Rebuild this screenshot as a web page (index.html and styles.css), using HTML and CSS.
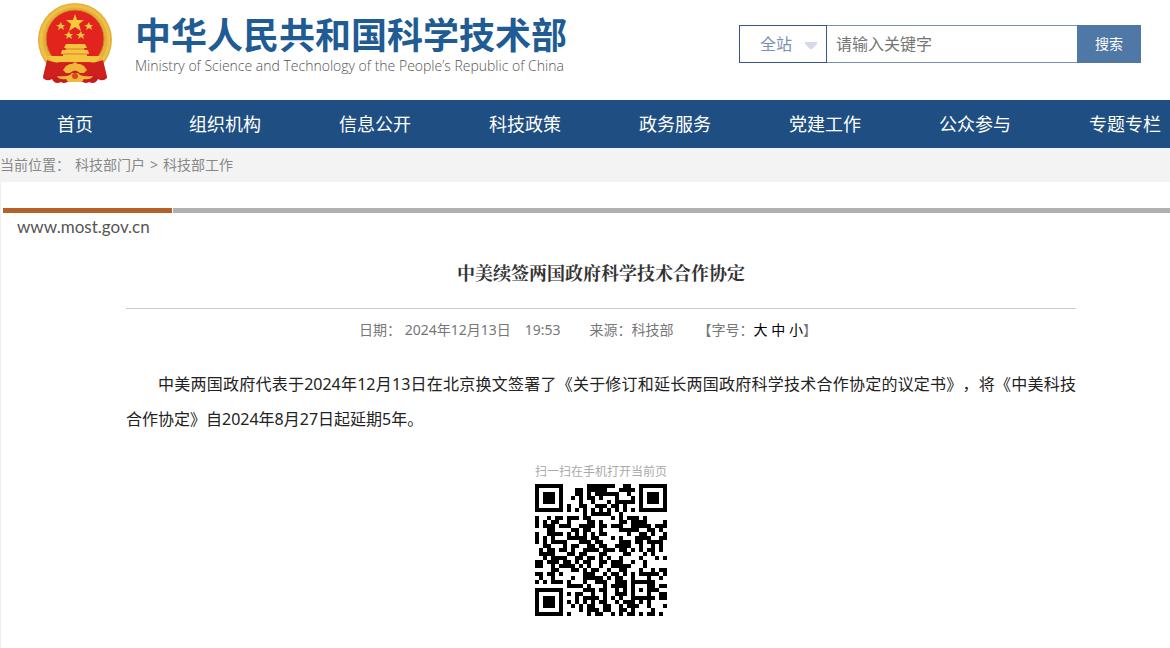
FILE: index.html
```html
<!DOCTYPE html>
<html lang="zh-CN">
<head>
<meta charset="utf-8">
<title>中美续签两国政府科学技术合作协定</title>
<link rel="stylesheet" href="styles.css">
</head>
<body>
<div class="page">
  <header class="header">
    <a class="brand" href="#">
      <svg class="emblem" viewBox="0 0 76 82" aria-hidden="true">
        <path fill="#c91a1e" d="M11 56L6 76q4 4 9 1q3 6 9 3q3 2 6 0h16q3 2 6 0q6 3 9-3q5 3 9-1L65 56z"/>
        <circle cx="38" cy="38" r="37" fill="#e5b039"/>
        <circle cx="38" cy="38" r="34" fill="none" stroke="#edc047" stroke-width="3"/>
        <circle cx="38" cy="37" r="29" fill="#e3231e" stroke="#c98b28"/>
        <path fill="#f9c93c" d="M38 12l2 6h7l-5 4 2 7-6-4-6 4 2-7-5-4h7z"/>
        <g fill="#f4c63f">
          <path d="M24 20l1 3h3l-2 2 1 3-3-2-3 2 1-3-3-2h3z"/>
          <path d="M52 20l1 3h3l-2 2 1 3-3-2-3 2 1-3-3-2h3z"/>
          <path d="M32 29l1 3h3l-2 2 1 3-3-2-3 2 1-3-3-2h3z"/>
          <path d="M44 29l1 3h3l-2 2 1 3-3-2-3 2 1-3-3-2h3z"/>
          <path d="M29 42h19l2 4h-3v2h4l1 4h-2v2h14l-5 6H15l-5-6h16v-2h-2l1-4h4v-2h-2z"/>
        </g>
        <path stroke="#e07a2a" d="M28 47h20M26 52h24"/>
        <path fill="#d0201e" d="M10 58q12 4 19 3h18q7 1 19-3l4 17q-10 2-15-3l-17 5-17-5q-5 5-15 3z"/>
        <path fill="#efb83a" d="M29 64l4-2h2l3-2 3 2h2l4 2 3 4-3 3h-4q-5-5-10 0h-4l-3-3z"/>
        <path fill="#efb83a" d="M20 74q9 1 13-1l2-2h6l2 2q4 2 13 1-2 4-9 3l-2 3H31l-2-3q-7 1-9-3z"/>
        <circle cx="38" cy="74" r="3" fill="#d9481e"/>
      </svg>
      <span class="brand-text">
        <strong class="brand-name">中华人民共和国科学技术部</strong>
        <span class="brand-en">Ministry of Science and Technology of the People’s Republic of China</span>
      </span>
    </a>
    <form class="search">
      <span class="scope">
        <select aria-label="搜索范围"><option>全站</option></select>
        <svg class="caret" viewBox="0 0 12 7" aria-hidden="true"><path d="M0 0h12v2L7 7H5L0 2z"/></svg>
      </span>
      <input class="keyword" type="text" placeholder="请输入关键字" aria-label="关键字">
      <button type="button">搜索</button>
    </form>
  </header>
  <nav class="nav">
    <a href="#">首页</a><a href="#">组织机构</a><a href="#">信息公开</a><a href="#">科技政策</a><a href="#">政务服务</a><a href="#">党建工作</a><a href="#">公众参与</a><a href="#">专题专栏</a>
  </nav>
  <div class="crumbs"><span>当前位置：</span><a href="#">科技部门户</a><span>&gt;</span><a href="#">科技部工作</a></div>
  <main class="content">
    <div class="rule"></div>
    <p class="site">www.most.gov.cn</p>
    <article class="article">
      <h1>中美续签两国政府科学技术合作协定</h1>
      <div class="meta">
        <span>日期： 2024年12月13日</span><span class="time">19:53</span><span class="source">来源：科技部</span>
        <span class="size">【字号：<button type="button">大</button> <button type="button">中</button> <button type="button">小</button>】</span>
      </div>
      <p class="body">中美两国政府代表于2024年12月13日在北京换文签署了《关于修订和延长两国政府科学技术合作协定的议定书》，将《中美科技合作协定》自2024年8月27日起延期5年。</p>
      <figure class="qr">
        <figcaption>扫一扫在手机打开当前页</figcaption>
        <svg id="qr" viewBox="0 0 33 33" role="img" aria-label="二维码"><path/></svg>
      </figure>
    </article>
  </main>
</div>
<script src="qr.js"></script>
</body>
</html>
```
FILE: styles.css
```css
* { box-sizing: border-box; }
html { overflow-x: hidden; }
body {
  margin: 0;
  overflow-x: hidden;
  background: #fff;
  color: #222;
  font: 14px/20px "Noto Sans", "Noto Sans CJK SC", sans-serif;
  text-spacing-trim: space-all;
}
a { color: inherit; text-decoration: none; }
button, input, select { font: inherit; color: inherit; margin: 0; border-radius: 0; }
.page { min-width: 1200px; }
.header {
  display: flex;
  justify-content: space-between;
  align-items: flex-start;
  height: 100px;
  padding: 2px 59px 0 37px;
}
.brand { display: flex; gap: 22px; }
.emblem { width: 76px; height: 82px; }
.brand-text { display: flex; flex-direction: column; padding-top: 14px; }
.brand-name { font-size: 36px; line-height: 40px; color: #205c93; }
.brand-en { font: 300 14px/20px "Open Sans", sans-serif; color: #555; }
.search { display: flex; height: 38px; margin-top: 23px; }
.scope {
  position: relative;
  display: flex;
  width: 88px;
  border: 1px solid #34558f;
  color: #7890b8;
}
.scope select {
  width: 100%;
  padding: 0 0 0 20px;
  border: 0;
  background: none;
  appearance: none;
  font-size: 16px;
}
.caret { position: absolute; right: 9px; top: 16px; width: 12px; height: 7px; fill: #d5dae8; }
.keyword {
  width: 250px;
  padding: 0 9px;
  border: 1px solid #7590b9;
  border-width: 1px 0;
  font-size: 16px;
}
.keyword::placeholder { color: #757575; }
.search button { width: 64px; padding: 0; border: 0; background: #4f78a7; color: #fff; }
.nav {
  display: grid;
  grid-template-columns: repeat(8, 1fr);
  background: #1f4f82;
  color: #fff;
  font-size: 18px;
  line-height: 48px;
  text-align: center;
}
.crumbs { display: flex; gap: 5px; background: #f3f3f3; color: #888; line-height: 34px; }
.content { min-height: 466px; padding: 26px 0 30px 1px; border-left: 1px solid #eee; }
.rule { display: flex; gap: 1px; height: 5px; margin-left: 1px; }
.rule::before { content: ""; width: 169px; background: #b5622a; }
.rule::after { content: ""; flex: 1; background: #b0b0b0; }
.site { margin: 4px 0 0 15px; font: 17px/20px Lato, sans-serif; color: #555; }
.article { padding: 0 124px; }
h1 {
  margin: 0;
  padding: 21px 0 22px;
  border-bottom: 1px solid #ccc;
  font: bold 18px/28px "Noto Serif CJK SC", "Noto Sans CJK SC", serif;
  color: #333;
  text-align: center;
}
.meta { display: flex; justify-content: center; padding-top: 11px; padding-right: 26px; color: #777; }
.time { margin-left: 14px; }
.source { margin-left: 29px; }
.size { margin-left: 24px; }
.size button { padding: 0; border: 0; background: none; color: #000; }
.body { margin: 27px 0 0; font-size: 16px; line-height: 35px; text-indent: 2em; text-align: justify; }
.qr { display: grid; justify-items: center; margin: 25px 0 0; }
.qr figcaption { font-size: 12px; line-height: 20px; color: #aaa; }
.qr svg { width: 132px; height: 132px; margin-top: 2px; shape-rendering: crispEdges; }
```
FILE: qr.js
```js
// QR code, version 4, error correction level M, byte mode.
(function () {
  var text = 'https://www.most.gov.cn/kjbgz/202412/t20241213_192688.html';
  var N = 33, DATA = 64, BLOCK = 32, EC = 18, MASK = 7;
  var exp = [], log = [], x = 1, i, r, c;
  for (i = 0; i < 255; i++) { exp[i] = x; log[x] = i; x <<= 1; if (x > 255) x ^= 285; }
  function mul(a, b) { return a && b ? exp[(log[a] + log[b]) % 255] : 0; }

  var bits = [];
  function put(v, n) { while (n--) bits.push((v >> n) & 1); }
  put(4, 4); put(text.length, 8);
  for (i = 0; i < text.length; i++) put(text.charCodeAt(i), 8);
  put(0, 4);
  var data = [];
  for (i = 0; i < bits.length; i += 8) data.push(parseInt(bits.slice(i, i + 8).join(''), 2));
  for (i = 0; data.length < DATA; i++) data.push(i % 2 ? 17 : 236);

  var gen = [1];
  for (i = 0; i < EC; i++) {
    var next = gen.concat([0]);
    for (var j = 0; j < gen.length; j++) next[j + 1] ^= mul(gen[j], exp[i]);
    gen = next;
  }
  function remainder(block) {
    var m = block.concat(new Array(EC).fill(0));
    for (var k = 0; k < block.length; k++) {
      var f = m[k];
      for (var g = 0; g < gen.length; g++) m[k + g] ^= mul(gen[g], f);
    }
    return m.slice(block.length);
  }
  var a = data.slice(0, BLOCK), b = data.slice(BLOCK), ea = remainder(a), eb = remainder(b);
  var stream = [];
  a.forEach(function (v, k) { stream.push(v, b[k]); });
  ea.forEach(function (v, k) { stream.push(v, eb[k]); });

  var grid = [];
  for (r = 0; r < N; r++) grid.push(new Array(N).fill(null));
  function finder(r0, c0) {
    for (var y = -1; y < 8; y++) for (var z = -1; z < 8; z++) {
      if (grid[r0 + y] === undefined || c0 + z < 0 || c0 + z >= N) continue;
      var d = Math.max(Math.abs(y - 3), Math.abs(z - 3));
      grid[r0 + y][c0 + z] = d !== 2 && d !== 4;
    }
  }
  finder(0, 0); finder(0, N - 7); finder(N - 7, 0);
  for (r = -2; r < 3; r++) for (c = -2; c < 3; c++) grid[26 + r][26 + c] = Math.max(Math.abs(r), Math.abs(c)) !== 1;
  for (i = 8; i < N - 8; i++) grid[i][6] = grid[6][i] = i % 2 === 0;

  var rem = MASK << 10;
  for (i = 14; i >= 10; i--) if ((rem >> i) & 1) rem ^= 1335 << (i - 10);
  var format = ((MASK << 10) | rem) ^ 21522;
  for (i = 0; i < 15; i++) {
    var on = ((format >> i) & 1) === 1;
    grid[i < 6 ? i : i < 8 ? i + 1 : N - 15 + i][8] = on;
    grid[8][i < 8 ? N - 1 - i : i < 9 ? 7 : 14 - i] = on;
  }
  grid[N - 8][8] = true;

  var masks = [
    function (r, c) { return (r + c) % 2; },
    function (r) { return r % 2; },
    function (r, c) { return c % 3; },
    function (r, c) { return (r + c) % 3; },
    function (r, c) { return ((r >> 1) + Math.floor(c / 3)) % 2; },
    function (r, c) { return r * c % 2 + r * c % 3; },
    function (r, c) { return (r * c % 2 + r * c % 3) % 2; },
    function (r, c) { return (r * c % 3 + (r + c) % 2) % 2; }
  ];
  var pos = 0, up = true;
  for (var col = N - 1; col > 0; col -= 2) {
    if (col === 6) col--;
    for (i = 0; i < N; i++) {
      r = up ? N - 1 - i : i;
      for (c = col; c > col - 2; c--) {
        if (grid[r][c] !== null) continue;
        var bit = pos < stream.length * 8 ? (stream[pos >> 3] >> (7 - pos % 8)) & 1 : 0;
        grid[r][c] = (bit === 1) !== (masks[MASK](r, c) === 0);
        pos++;
      }
    }
    up = !up;
  }

  var path = '';
  for (r = 0; r < N; r++) for (c = 0; c < N; c++) if (grid[r][c]) path += 'M' + c + ' ' + r + 'h1v1h-1z';
  document.querySelector('#qr path').setAttribute('d', path);
})();
```
